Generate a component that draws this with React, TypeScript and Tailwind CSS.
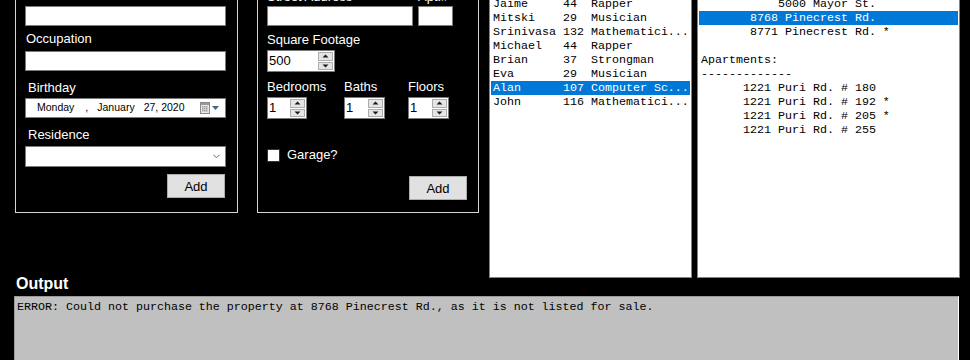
import React from "react";

const people: [string, string, string][] = [
  ["Jaime", "44", "Rapper"],
  ["Mitski", "29", "Musician"],
  ["Srinivasa", "132", "Mathematici..."],
  ["Michael", "44", "Rapper"],
  ["Brian", "37", "Strongman"],
  ["Eva", "29", "Musician"],
  ["Alan", "107", "Computer Sc..."],
  ["John", "116", "Mathematici..."],
];

const properties = [
  "           5000 Mayor St.",
  "       8768 Pinecrest Rd.",
  "       8771 Pinecrest Rd. *",
  "",
  "Apartments:",
  "-------------",
  "      1221 Puri Rd. # 180",
  "      1221 Puri Rd. # 192 *",
  "      1221 Puri Rd. # 205 *",
  "      1221 Puri Rd. # 255",
];

function Label({ children, className = "" }: { children: React.ReactNode; className?: string }) {
  return <div className={`h-[15px] text-[13px] leading-[15px] text-white ${className}`}>{children}</div>;
}

function TextBox({ className = "" }: { className?: string }) {
  return <div className={`h-[20px] border border-[#7a7a7a] bg-white ${className}`} />;
}

function Arrow({ down }: { down?: boolean }) {
  return (
    <svg width="7" height="4" viewBox="0 0 7 4">
      <path d={down ? "M0.5 0.5h6L3.5 3.5z" : "M0.5 3.5h6L3.5 0.5z"} fill="#1a1a1a" />
    </svg>
  );
}

function Spinner({ value, className }: { value: string; className: string }) {
  return (
    <div className={`flex h-[22px] items-stretch border border-[#7a7a7a] bg-white ${className}`}>
      <span className="flex-1 pl-px text-[13px] leading-[20px] text-black">{value}</span>
      <div className="mr-px flex w-[15px] flex-col gap-px py-px">
        <div className="flex flex-1 items-center justify-center border border-[#adadad] bg-[#e5e5e5]">
          <Arrow />
        </div>
        <div className="flex flex-1 items-center justify-center border border-[#adadad] bg-[#e5e5e5]">
          <Arrow down />
        </div>
      </div>
    </div>
  );
}

function AddButton({ className = "" }: { className?: string }) {
  return (
    <button
      type="button"
      className={`h-[24px] w-[58px] self-end border border-[#adadad] bg-[#e1e1e1] text-[13px] leading-none text-black ${className}`}
    >
      Add
    </button>
  );
}

function CalendarIcon() {
  return (
    <svg width="10" height="12" viewBox="0 0 10 12">
      <rect x="0.5" y="0.5" width="9" height="11" fill="#e9e9e9" stroke="#8a8a8a" />
      <rect x="1" y="1" width="8" height="2" fill="#9a9a9a" />
      {[4, 6, 8].map((y) =>
        [2, 4, 6].map((x) => <rect key={`${x}-${y}`} x={x} y={y} width="1.5" height="1.5" fill="#a0a0a0" />)
      )}
    </svg>
  );
}

export default function App() {
  return (
    <div className="h-[360px] w-[970px] overflow-hidden bg-black font-['Liberation_Sans',Arial,sans-serif] text-white">
      <div className="-mt-[30px] flex items-start">
        {/* person form */}
        <div className="ml-[15px] mt-[10px] flex h-[233px] w-[223px] flex-col border border-[#d5d5d5] pl-[9px]">
          <Label className="mt-[5px] pl-px">Name</Label>
          <TextBox className="mt-[5px] w-[201px]" />
          <Label className="mt-[5px] pl-px">Occupation</Label>
          <TextBox className="mt-[5px] w-[201px]" />
          <Label className="mt-[9px] pl-[3px]">Birthday</Label>
          <div className="mt-[3px] flex h-[20px] w-[201px] items-center border border-[#7a7a7a] bg-white text-[10.5px] text-black">
            <span className="ml-[11px]">Monday</span>
            <span className="ml-[11px]">,</span>
            <span className="ml-[9px]">January</span>
            <span className="ml-[9px]">27, 2020</span>
            <span className="ml-auto flex items-center gap-[2px] pr-[6px]">
              <CalendarIcon />
              <svg width="7" height="4" viewBox="0 0 7 4">
                <path d="M0 0h7L3.5 4z" fill="#4d6185" />
              </svg>
            </span>
          </div>
          <Label className="mt-[9px] pl-[3px]">Residence</Label>
          <div className="mt-[4px] flex h-[21px] w-[201px] items-center justify-end border border-[#7a7a7a] bg-white pr-[5px]">
            <svg width="7" height="5" viewBox="0 0 7 5">
              <path d="M0.5 0.8L3.5 3.8L6.5 0.8" fill="none" stroke="#6a6a6a" strokeWidth="1" />
            </svg>
          </div>
          <AddButton className="mr-[12px] mt-[7px]" />
        </div>

        {/* residence form */}
        <div className="ml-[19px] mt-[10px] flex h-[233px] w-[222px] flex-col border border-[#d5d5d5] pl-[9px]">
          <div className="flex gap-[5px]">
            <div className="flex w-[146px] flex-col">
              <Label className="mt-[8px]">Street Address</Label>
              <TextBox className="mt-[2px]" />
            </div>
            <div className="flex w-[35px] flex-col">
              <Label className="mt-[8px]">Apt.#</Label>
              <TextBox className="mt-[2px]" />
            </div>
          </div>
          <Label className="mt-[6px]">Square Footage</Label>
          <Spinner value="500" className="mt-[3px] w-[68px]" />
          <div className="mt-[7px] flex">
            <div className="flex w-[77px] flex-col">
              <Label>Bedrooms</Label>
              <Spinner value="1" className="mt-[3px] w-[40px]" />
            </div>
            <div className="flex w-[64px] flex-col">
              <Label>Baths</Label>
              <Spinner value="1" className="mt-[3px] w-[41px]" />
            </div>
            <div className="flex flex-col">
              <Label>Floors</Label>
              <Spinner value="1" className="mt-[3px] w-[41px]" />
            </div>
          </div>
          <div className="mt-[28px] flex items-start">
            <div className="mt-[2px] h-[13px] w-[13px] border border-[#333] bg-white" />
            <Label className="ml-[7px]">Garage?</Label>
          </div>
          <AddButton className="mr-[11px] mt-[14px]" />
        </div>

        {/* people list */}
        <div className="ml-[10px] mt-[20px] h-[288px] w-[203px] border border-[#828282] bg-white pt-[6px] font-['Liberation_Mono',monospace] text-[11.67px] leading-[14px] text-black">
          {people.map(([name, age, job], i) => (
            <div
              key={name}
              className={`mx-px h-[14px] whitespace-pre pl-[2px] ${i === 6 ? "bg-[#0078d7] text-white" : ""}`}
            >
              {name.padEnd(10) + age.padEnd(4) + job}
            </div>
          ))}
        </div>

        {/* property list */}
        <div className="ml-[5px] mt-[20px] h-[288px] w-[263px] border border-[#828282] bg-white pt-[6px] font-['Liberation_Mono',monospace] text-[11.67px] leading-[14px] text-black">
          {properties.map((line, i) => (
            <div
              key={i}
              className={`mx-px h-[14px] whitespace-pre pl-[2px] ${i === 1 ? "bg-[#0078d7] text-white" : ""}`}
            >
              {line}
            </div>
          ))}
        </div>
      </div>

      <div className="-mt-[3px] ml-[16px] text-[16px] font-bold leading-[18px]">Output</div>
      <div className="ml-[14px] mt-[3px] h-[80px] w-[945px] border border-b-white border-l-[#9a9a9a] border-r-white border-t-[#9a9a9a] bg-[#c0c0c0] pl-[2px] pt-[3px] font-['Liberation_Mono',monospace] text-[11.67px] leading-[14px] text-black">
        ERROR: Could not purchase the property at 8768 Pinecrest Rd., as it is not listed for sale.
      </div>
    </div>
  );
}
